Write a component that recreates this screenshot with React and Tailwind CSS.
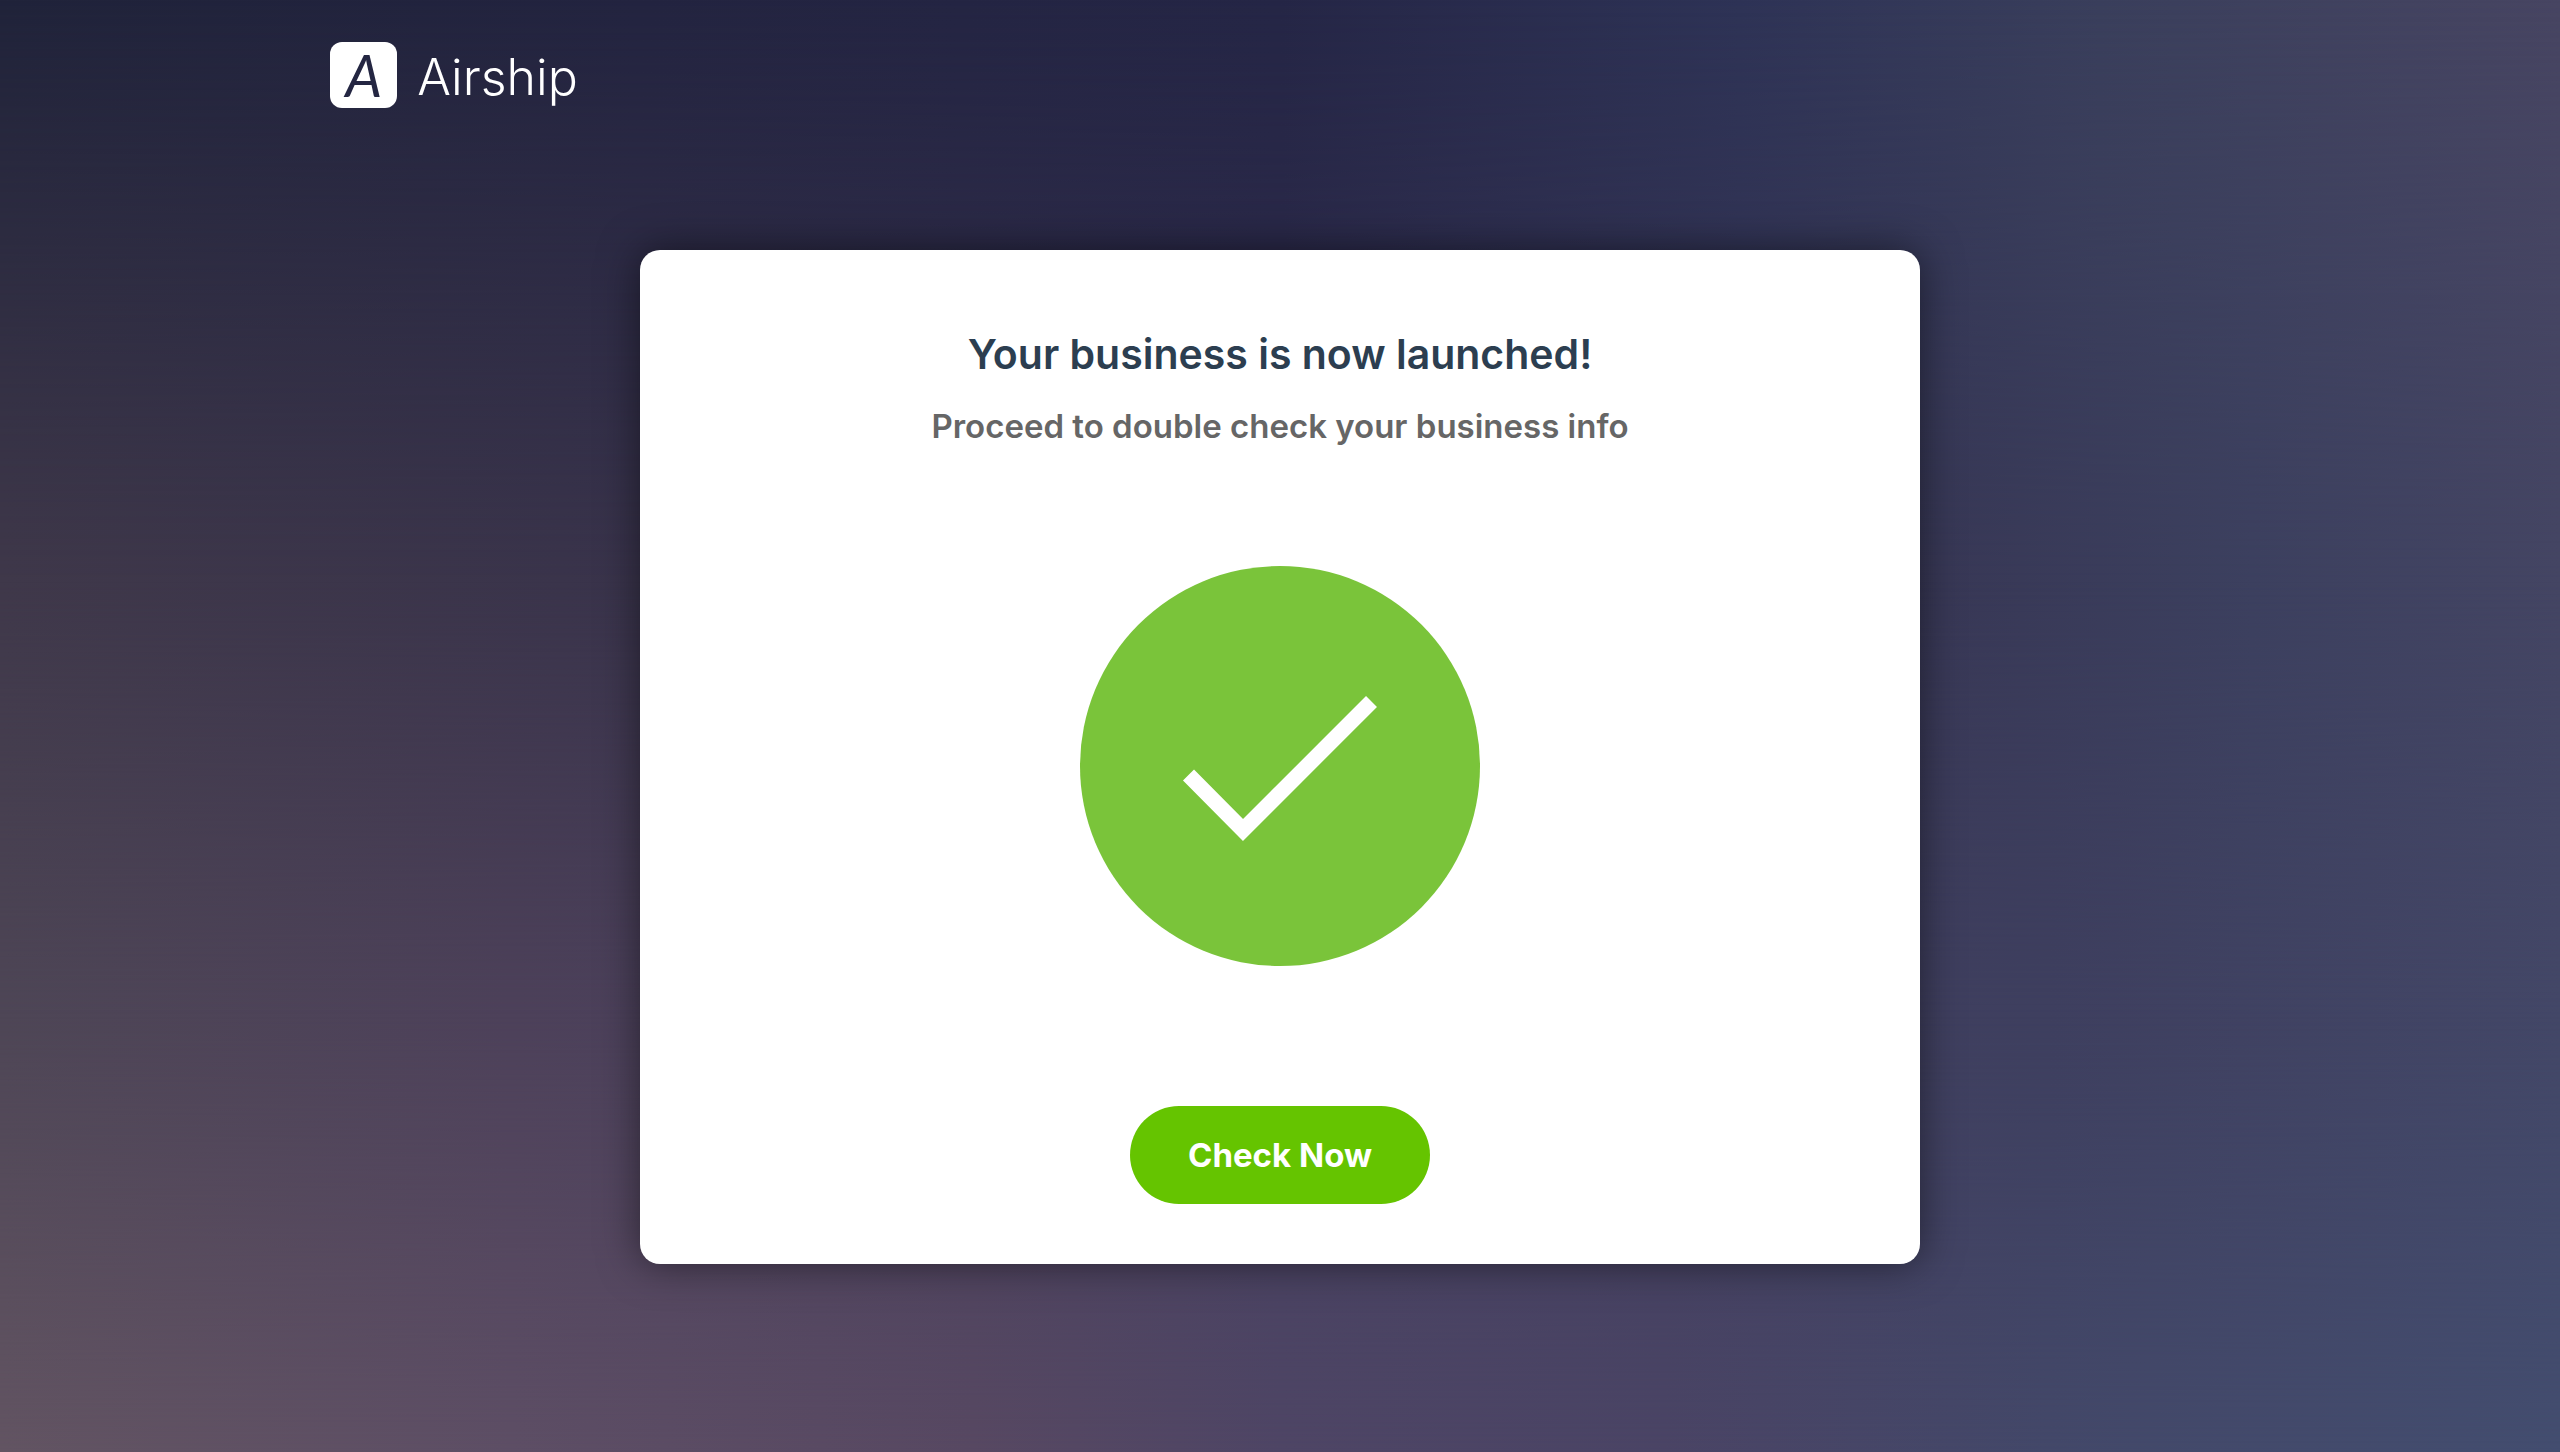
const CheckCircle = () => (
  <svg viewBox="0 0 400 400" className="w-[400px] max-w-full" aria-hidden="true">
    <circle cx="200" cy="200" r="200" fill="#7ac43a" />
    <path d="M108.5 209 163 264 291.5 135.5" fill="none" stroke="#fff" strokeWidth="15.5" />
  </svg>
);

// Evening sky: four horizontal bands that fade into each other
const Sky = () => (
  <div className="absolute inset-0 -z-10 bg-[linear-gradient(to_right,#20233a,#232440_25%,#252646_50%,#2e3356_68%,#3a3f5c_82%,#474562)]">
    <div className="absolute inset-0 mask-[linear-gradient(to_bottom,transparent,black_40%)] bg-[linear-gradient(to_right,#3f384a,#3a344b_22%,#302c4c_50%,#383856_76%,#3c405f_88%,#444563)]" />
    <div className="absolute inset-0 mask-[linear-gradient(to_bottom,transparent_40%,black_70%)] bg-[linear-gradient(to_right,#4e4656,#4d415a_20%,#46405f_50%,#3e3f5f_80%,#434767)]" />
    <div className="absolute inset-0 mask-[linear-gradient(to_bottom,transparent_70%,black)] bg-[linear-gradient(to_right,#625462,#5d4e65_20%,#574862_38%,#4e4565_50%,#4a4465_65%,#434869_80%,#434d6f)]" />
  </div>
);

const Logo = () => (
  <a href="#" className="inline-flex items-center gap-5 text-white">
    <span className="flex h-[66px] w-[67px] items-center justify-center rounded-xl bg-white font-[family-name:Lato,sans-serif] text-[58px] leading-none italic text-[#242642]">
      A
    </span>
    <span className="pt-1 text-[50px] leading-none font-light">Airship</span>
  </a>
);

const App = () => {
  return (
    <div className="relative isolate min-h-screen font-[family-name:Inter,sans-serif]">
      <Sky />
      <header className="mx-[12.9%] flex pt-[42px]">
        <Logo />
      </header>
      <main className="mx-auto mt-[142px] flex w-1/2 flex-col items-center rounded-[20px] bg-white pt-20 pb-[60px] text-center shadow-[0_0_40px_rgba(0,0,0,0.5)]">
        <h1 className="text-[41px] leading-[48px] font-semibold text-[#2c3e50]">
          Your business is now launched!
        </h1>
        <p className="mt-6 text-[33px] leading-[48px] font-semibold text-[#666]">
          Proceed to double check your business info
        </p>
        <div className="mt-[116px] mb-[140px]">
          <CheckCircle />
        </div>
        <button
          type="button"
          className="w-[300px] rounded-full bg-[#65c400] py-[25px] text-[33px] leading-[48px] font-bold text-white"
        >
          Check Now
        </button>
      </main>
    </div>
  );
};

export default App;
